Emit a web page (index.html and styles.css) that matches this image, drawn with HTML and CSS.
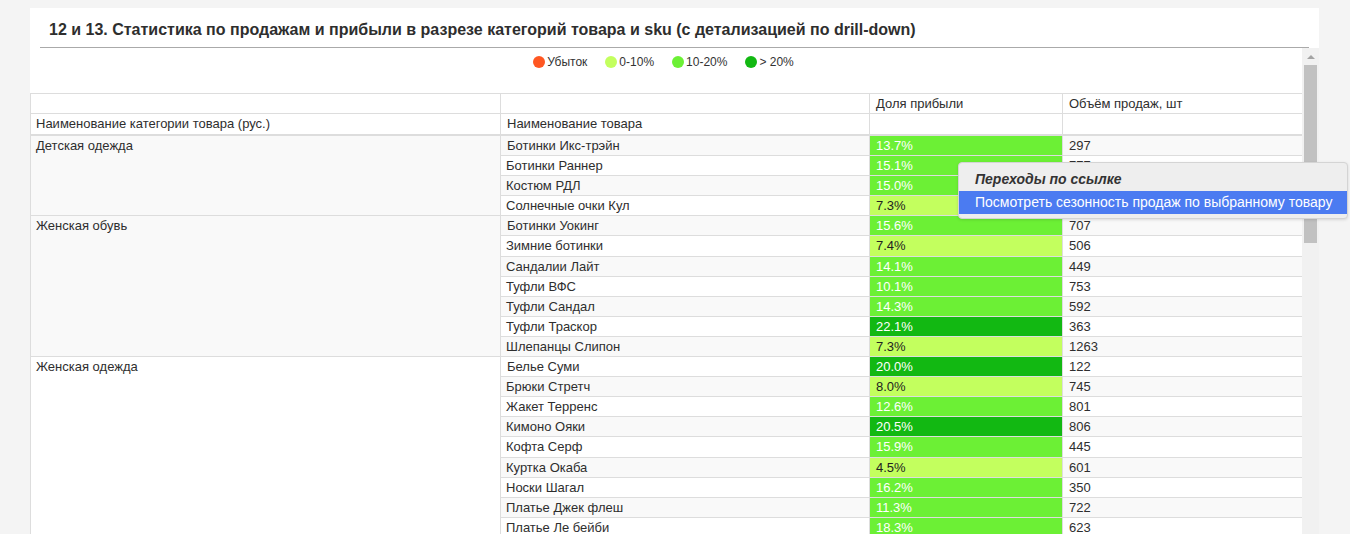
FILE: index.html
```html
<!DOCTYPE html>
<html lang="ru">
<head>
<meta charset="utf-8">
<title>Статистика по продажам</title>
<link rel="stylesheet" href="styles.css">
</head>
<body>
<div class="page">
  <div class="panel">
    <div class="panel-head">
      <h2 class="title">12 и 13. Статистика по продажам и прибыли в разрезе категорий товара и sku (с детализацией по drill-down)</h2>
    </div>
    <div class="panel-body">
      <div class="scroll-content">
        <div class="legend">
          <span class="legend-item"><span class="dot dot-loss"></span>Убыток</span>
          <span class="legend-item"><span class="dot dot-low"></span>0-10%</span>
          <span class="legend-item"><span class="dot dot-mid"></span>10-20%</span>
          <span class="legend-item"><span class="dot dot-high"></span>&gt; 20%</span>
        </div>
        <table class="grid">
          <colgroup>
            <col class="c1"><col class="c2"><col class="c3"><col class="c4">
          </colgroup>
          <thead>
            <tr class="head1"><th></th><th></th><th>Доля прибыли</th><th>Объём продаж, шт</th></tr>
            <tr class="head2"><th>Наименование категории товара (рус.)</th><th>Наименование товара</th><th></th><th></th></tr>
          </thead>
          <tbody>
            <tr class="s"><td rowspan="4">Детская одежда</td><td>Ботинки Икс-трэйн</td><td class="p mid">13.7%</td><td>297</td></tr>
            <tr><td>Ботинки Раннер</td><td class="p mid">15.1%</td><td>777</td></tr>
            <tr class="s"><td>Костюм РДЛ</td><td class="p mid">15.0%</td><td>512</td></tr>
            <tr><td>Солнечные очки Кул</td><td class="p low">7.3%</td><td>398</td></tr>
            <tr class="s"><td rowspan="7">Женская обувь</td><td>Ботинки Уокинг</td><td class="p mid">15.6%</td><td>707</td></tr>
            <tr><td>Зимние ботинки</td><td class="p low">7.4%</td><td>506</td></tr>
            <tr class="s"><td>Сандалии Лайт</td><td class="p mid">14.1%</td><td>449</td></tr>
            <tr><td>Туфли ВФС</td><td class="p mid">10.1%</td><td>753</td></tr>
            <tr class="s"><td>Туфли Сандал</td><td class="p mid">14.3%</td><td>592</td></tr>
            <tr><td>Туфли Траскор</td><td class="p high">22.1%</td><td>363</td></tr>
            <tr class="s"><td>Шлепанцы Слипон</td><td class="p low">7.3%</td><td>1263</td></tr>
            <tr><td rowspan="11">Женская одежда</td><td>Белье Суми</td><td class="p high">20.0%</td><td>122</td></tr>
            <tr class="s"><td>Брюки Стретч</td><td class="p low">8.0%</td><td>745</td></tr>
            <tr><td>Жакет Терренс</td><td class="p mid">12.6%</td><td>801</td></tr>
            <tr class="s"><td>Кимоно Ояки</td><td class="p high">20.5%</td><td>806</td></tr>
            <tr><td>Кофта Серф</td><td class="p mid">15.9%</td><td>445</td></tr>
            <tr class="s"><td>Куртка Окаба</td><td class="p low">4.5%</td><td>601</td></tr>
            <tr><td>Носки Шагал</td><td class="p mid">16.2%</td><td>350</td></tr>
            <tr class="s"><td>Платье Джек флеш</td><td class="p mid">11.3%</td><td>722</td></tr>
            <tr><td>Платье Ле бейби</td><td class="p mid">18.3%</td><td>623</td></tr>
            <tr class="s"><td>Рубашка Поло</td><td class="p mid">13.2%</td><td>514</td></tr>
            <tr><td>Юбка Миди</td><td class="p low">9.1%</td><td>388</td></tr>
          </tbody>
        </table>
      </div>
      <div class="scrollbar">
        <div class="sb-arrow"></div>
        <div class="sb-thumb"></div>
      </div>
    </div>
  </div>

  <div class="ctx-menu">
    <div class="ctx-title">Переходы по ссылке</div>
    <div class="ctx-item">Посмотреть сезонность продаж по выбранному товару</div>
  </div>
</div>
</body>
</html>
```

FILE: styles.css
```css
html, body {
  margin: 0;
  padding: 0;
  background: #f4f4f4;
  font-family: "Liberation Sans", Arial, sans-serif;
  color: #333;
}

.page {
  position: relative;
  width: 1350px;
  height: 534px;
  overflow: hidden;
  padding: 8px 0 0 30px;
  box-sizing: border-box;
}

.panel {
  width: 1289px;
  height: 526px;
  background: #fff;
  display: flex;
  flex-direction: column;
}

.panel-head {
  padding: 0 10px;
}

.title {
  margin: 0;
  padding: 12px 0 7px 9px;
  font-size: 16px;
  line-height: 20px;
  font-weight: bold;
  color: #2e2e2e;
  border-bottom: 1px solid #aaa;
}

.panel-body {
  flex: 1;
  display: flex;
  min-height: 0;
}

.scroll-content {
  flex: 1;
  overflow: hidden;
  min-width: 0;
}

.legend {
  display: flex;
  justify-content: center;
  gap: 18px;
  margin: 6px 0 0;
  padding-right: 5px;
  height: 16px;
  align-items: center;
  font-size: 12px;
  color: #333;
}

.legend-item {
  display: inline-flex;
  align-items: center;
  gap: 2px;
}

.dot {
  width: 12px;
  height: 12px;
  border-radius: 50%;
  display: inline-block;
}
.dot-loss { background: #ff5722; }
.dot-low { background: #c3ff5e; }
.dot-mid { background: #6cf035; }
.dot-high { background: #12b812; }

.grid {
  margin-top: 23px;
  border-collapse: collapse;
  table-layout: fixed;
  width: 1272px;
  font-size: 13px;
  color: #2e2e2e;
}

.c1 { width: 470px; }
.c2 { width: 369px; }
.c3 { width: 193px; }
.c4 { width: 240px; }

.grid th,
.grid td {
  border: 1px solid #ddd;
  padding: 0 5px 0 6px;
  text-align: left;
  vertical-align: top;
  font-weight: normal;
  white-space: nowrap;
  overflow: hidden;
}

.grid th {
  height: 19px;
  line-height: 19px;
  background: #fff;
}

.grid th:first-child,
.grid td:first-child {
  padding-left: 5px;
}

.grid .head2 th {
  height: 20px;
  line-height: 20px;
  border-bottom: 2px solid #ddd;
}

.grid td {
  height: 18.1px;
  line-height: 18px;
  padding-top: 1px;
  background: #fff;
}

.grid tr.s td {
  background: #f9f9f9;
}

.grid td.p {
  color: #fff;
}

.grid td.low,
.grid tr.s td.low {
  background: #c3ff5e;
  color: #222;
}

.grid td.mid,
.grid tr.s td.mid {
  background: #6cf035;
}

.grid td.high,
.grid tr.s td.high {
  background: #12b812;
}

.scrollbar {
  width: 17px;
  background: #f1f1f1;
  display: flex;
  flex-direction: column;
  align-items: center;
}

.sb-arrow {
  margin-top: 7px;
  width: 0;
  height: 0;
  border-left: 4px solid transparent;
  border-right: 4px solid transparent;
  border-bottom: 4px solid #a3a3a3;
}

.sb-thumb {
  margin-top: 6px;
  width: 13px;
  height: 178px;
  background: #c1c1c1;
}

.ctx-menu {
  position: absolute;
  left: 958px;
  top: 162px;
  width: 388px;
  padding-bottom: 4px;
  background: #eeeeee;
  border: 1px solid #d4d4d4;
  border-radius: 4px;
  box-shadow: 0 1px 3px rgba(0, 0, 0, 0.12);
}

.ctx-title {
  height: 28px;
  line-height: 32px;
  padding-left: 16px;
  font-size: 14px;
  font-weight: bold;
  font-style: italic;
  color: #333;
}

.ctx-item {
  height: 23px;
  line-height: 23px;
  padding-left: 16px;
  background: #4b7bf1;
  color: #fff;
  font-size: 14px;
}
```
